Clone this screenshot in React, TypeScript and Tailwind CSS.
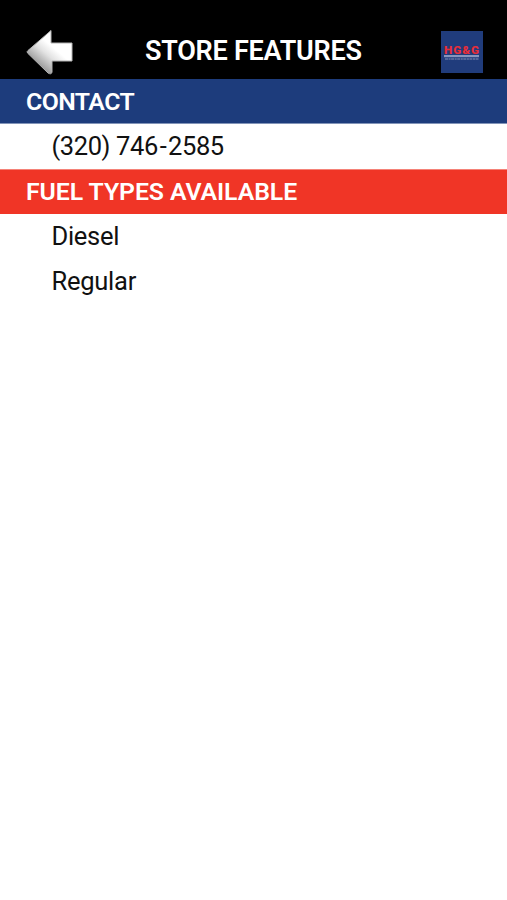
export default function App() {
  return (
    <main className="h-[900px] w-[507px] overflow-hidden bg-white font-['Roboto',sans-serif] text-[25.5px] text-[#111]">
      <header className="flex h-[79px] items-end bg-black pr-6 pl-[26px]">
        <button aria-label="Back" className="mb-[3px] h-[47px] w-[48px]">
          <svg viewBox="0 0 48 47" className="h-full w-full">
            <defs>
              <linearGradient id="arrow" x1="0.65" y1="0.45" x2="0.3" y2="0.85">
                <stop offset="0" stopColor="#fff" />
                <stop offset="0.4" stopColor="#e2e2e2" />
                <stop offset="1" stopColor="#999" />
              </linearGradient>
            </defs>
            <path d="M25 1.5 V14 H46 V32 H26 V43 Q25.5 46 22 44 L1.5 24 Q0.5 22.5 2 21.5 Z" fill="url(#arrow)" stroke="#b4b4b4" strokeLinejoin="round" />
          </svg>
        </button>
        <h1 className="mb-3 ml-[71px] w-[296px] text-[27px] leading-[32px] font-semibold tracking-[-0.24px] whitespace-nowrap text-white">STORE FEATURES</h1>
        <svg viewBox="0 0 42 42" className="mb-1.5 h-[42px] w-[42px] shrink-0">
          <rect width="42" height="42" fill="#203c7c" />
          <text x="3" y="23" textLength="36" lengthAdjust="spacingAndGlyphs" fontFamily="Roboto" fontWeight="900" fontSize="11.8" letterSpacing="1" fill="#e72e39">HG&amp;G</text>
          <rect x="3" y="24" width="35" height="2.2" fill="#8795bd" />
          <path d="M4 28H38" stroke="#8390b7" strokeWidth="1.2" strokeDasharray="3 .6 2 .5" />
        </svg>
      </header>
      <h2 className="h-[45px] border-b border-[#8294b8] bg-[#1d3c7c] pl-[26px] text-[24.8px] leading-[45px] font-semibold tracking-[-0.55px] text-white">CONTACT</h2>
      <p className="h-[45px] pl-[51.5px] leading-[45px] tracking-[-0.4px]">(320) 746<span className="mx-[1.8px]">-</span>2585</p>
      <h2 className="h-[45px] border-t border-[#f58278] bg-[#f03526] pl-[26px] text-[24.8px] leading-[43px] font-semibold tracking-[-0.07px] text-white">FUEL TYPES AVAILABLE</h2>
      <p className="h-[45px] pl-[51.5px] leading-[45px] tracking-[-0.3px]">Diesel</p>
      <p className="h-[45px] pl-[51.5px] leading-[45px] tracking-[-0.25px]">Regular</p>
    </main>
  );
}
